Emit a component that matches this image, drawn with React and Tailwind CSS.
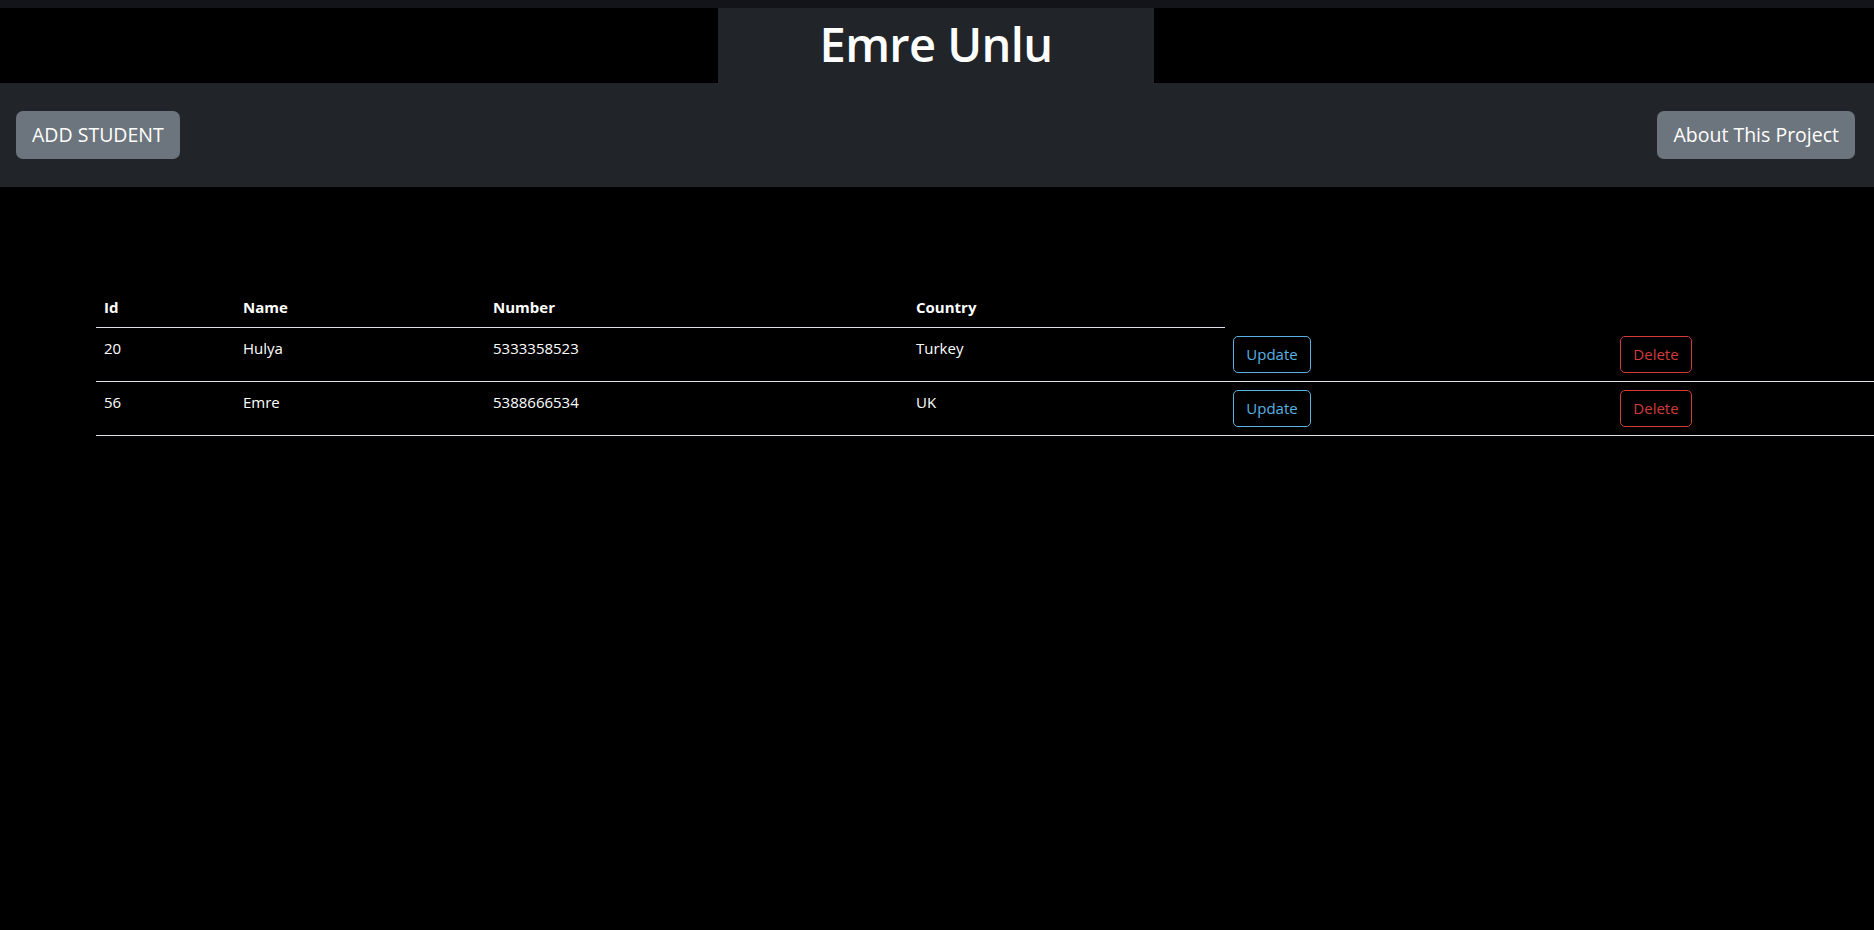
import React from "react";

const students = [
  { id: 20, name: "Hulya", number: "5333358523", country: "Turkey" },
  { id: 56, name: "Emre", number: "5388666534", country: "UK" },
];

export default function App() {
  return (
    <div className="min-h-screen w-full overflow-hidden bg-black text-white font-['Segoe_UI','Open_Sans',sans-serif]">
      {/* top strip */}
      <div className="h-2 bg-[#13131a]" />

      {/* title */}
      <header className="h-[75px] flex justify-center bg-black">
        <div className="w-[436px] ml-[-2px] bg-[#212529] flex items-center justify-center">
          <h1 className="text-[47px] font-semibold leading-none tracking-[-0.6px] pb-[2px]">Emre Unlu</h1>
        </div>
      </header>

      {/* nav */}
      <nav className="h-[104px] bg-[#212529] flex items-center justify-between pl-4 pr-[19px]">
        <button className="h-12 px-4 rounded-[7px] bg-[#6c757d] text-white text-[19.5px]">
          ADD STUDENT
        </button>
        <button className="h-12 px-4 rounded-[7px] bg-[#6c757d] text-white text-[19.5px]">
          About This Project
        </button>
      </nav>

      <div className="pt-[100px] pl-24">
        <table className="w-[2000px] table-fixed border-collapse text-[15px] align-top">
          <colgroup>
            <col className="w-[139px]" />
            <col className="w-[250px]" />
            <col className="w-[423px]" />
            <col className="w-[317px]" />
            <col className="w-[387px]" />
            <col />
          </colgroup>
          <thead>
            <tr>
              {["Id", "Name", "Number", "Country"].map((h) => (
                <th key={h} className="text-left font-bold px-2 py-2 leading-6 border-b border-[#dee2e6]">
                  {h}
                </th>
              ))}
            </tr>
          </thead>
          <tbody>
            {students.map((s) => (
              <tr key={s.id}>
                <td className="px-2 py-2 leading-6 align-top border-b border-[#dee2e6]">{s.id}</td>
                <td className="px-2 py-2 leading-6 align-top border-b border-[#dee2e6]">{s.name}</td>
                <td className="px-2 py-2 leading-6 align-top border-b border-[#dee2e6]">{s.number}</td>
                <td className="px-2 py-2 leading-6 align-top border-b border-[#dee2e6]">{s.country}</td>
                <td className="px-2 py-2 align-top border-b border-[#dee2e6]">
                  <button className="block h-[37px] w-[78px] rounded-[5px] border border-[#5ab2e2] text-[#5ab2e2] text-[15px]">
                    Update
                  </button>
                </td>
                <td className="px-2 py-2 align-top border-b border-[#dee2e6]">
                  <button className="block h-[37px] w-[72px] rounded-[5px] border border-[#d23b3b] text-[#d23b3b] text-[15px]">
                    Delete
                  </button>
                </td>
              </tr>
            ))}
          </tbody>
        </table>
      </div>
    </div>
  );
}
